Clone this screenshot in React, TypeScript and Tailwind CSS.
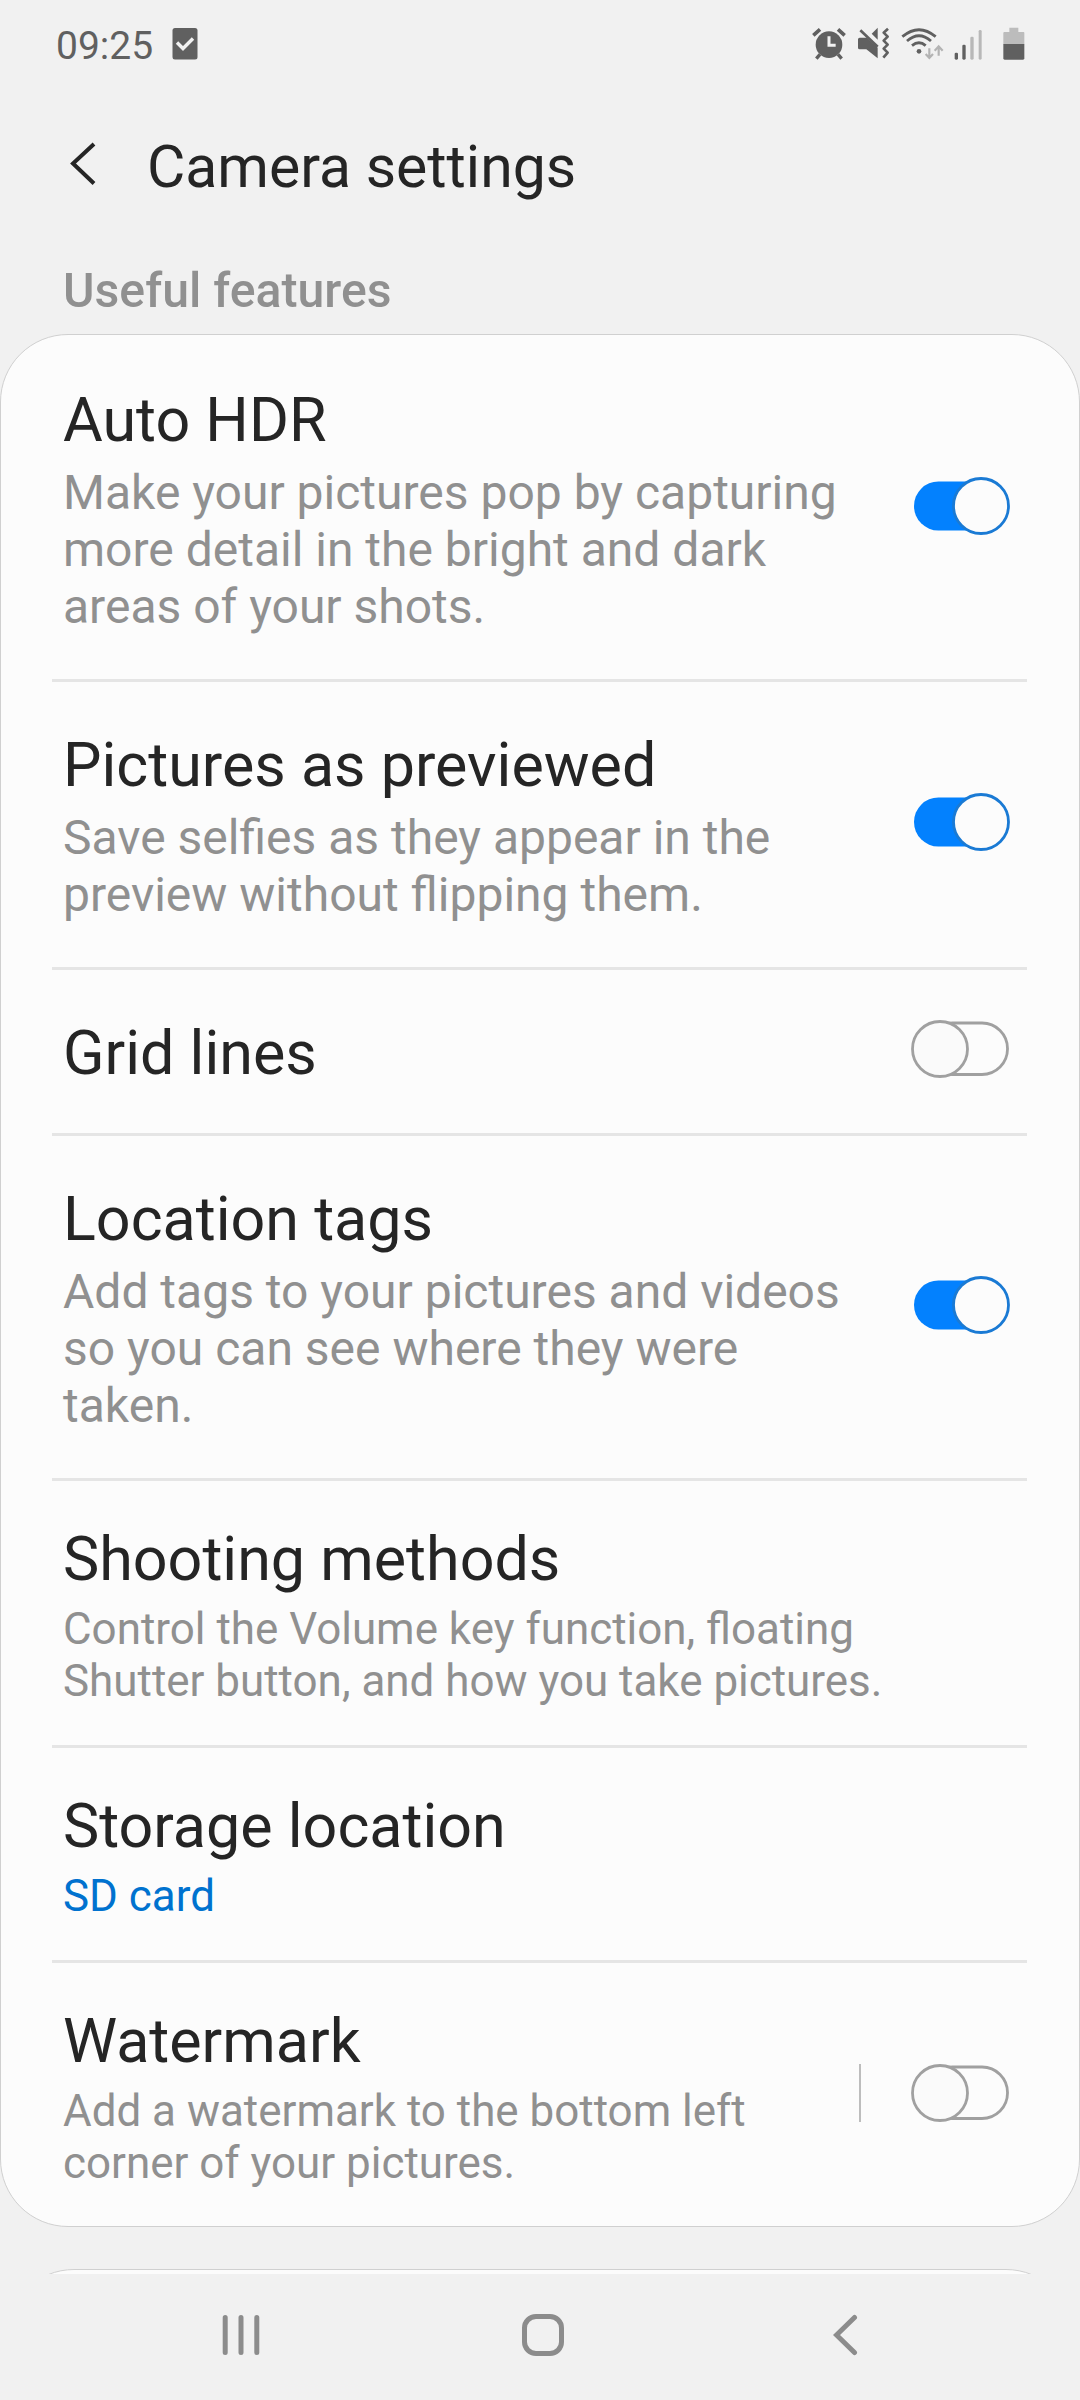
import type { ReactNode } from 'react';

function Toggle({ on, lift = 'mb-[3px]' }: { on: boolean; lift?: string }) {
  return (
    <svg className={`block h-[60px] w-[100px] shrink-0 ${lift}`} viewBox="0 0 100 60" fill="none">
      {on ? (
        <>
          <rect x="3" y="5.5" width="90" height="49" rx="24.5" fill="#0381fe" />
          <circle cx="70" cy="30" r="27.5" fill="#fcfcfc" stroke="#1a7ad4" strokeWidth="2.8" />
        </>
      ) : (
        <>
          <rect x="16" y="4" width="80.5" height="51.5" rx="25.5" stroke="#a0a0a0" strokeWidth="2.8" />
          <circle cx="29" cy="30" r="27.5" fill="#fafafa" stroke="#a0a0a0" strokeWidth="2.8" />
        </>
      )}
    </svg>
  );
}

function Row({ title, height, pad, children, right }: { title: string; height: string; pad: string; children?: ReactNode; right?: ReactNode }) {
  return (
    <div className={`flex items-center ${height}`}>
      <div className={`h-full flex-1 pl-[62px] ${pad}`}>
        <h2 className="text-[61px] leading-[70px] whitespace-nowrap text-[#252525]">{title}</h2>
        {children}
      </div>
      <div className="flex items-center pr-[68px]">{right}</div>
    </div>
  );
}

function Large({ lines }: { lines: string[] }) {
  return (
    <div className="mt-[9px] text-[48px] leading-[57px] whitespace-nowrap text-[#909090]">
      {lines.map((l) => (
        <p key={l}>{l}</p>
      ))}
    </div>
  );
}

function Small({ lines, color = 'text-[#909090]' }: { lines: string[]; color?: string }) {
  return (
    <div className={`mt-[9px] text-[43.95px] leading-[52px] whitespace-nowrap ${color}`}>
      {lines.map((l) => (
        <p key={l}>{l}</p>
      ))}
    </div>
  );
}

function Divider() {
  return <div className="mr-[52px] ml-[51px] h-[3px] bg-[#e5e5e5]" />;
}

function StatusBar() {
  return (
    <div className="flex h-[88px] items-start pt-[26px] pl-[56px]">
      <span className="mt-[-3px] text-[39px] leading-[46px] text-[#606060]">09:25</span>
      <svg className="mt-[2px] ml-[19px] h-[32px] w-[26px]" viewBox="0 0 26 32" fill="none">
        <rect x="0.5" y="0" width="25" height="31.5" rx="2.5" fill="#606060" />
        <path d="M5 14.5 L11 20.5 L21 10.5" stroke="#f1f1f1" strokeWidth="3.4" />
      </svg>
      <div className="mt-[1px] ml-auto flex h-[34px] pr-[54px]">
        <svg className="h-[34px] w-[34px]" viewBox="96 50 102 102" fill="none" stroke="#606060">
          <circle cx="147" cy="103" r="40" fill="#606060" stroke="none" />
          <path d="M100 75 L120 57 M174 57 L194 75" strokeWidth="11" />
          <path d="M120 132 L109 145 M174 132 L185 145" strokeWidth="10" />
          <path d="M147 78 V105 H167" stroke="#f1f1f1" strokeWidth="9" />
        </svg>
        <svg className="ml-[11px] h-[34px] w-[34px]" viewBox="232 50 102 102" fill="none">
          <path d="M240 82 H262 L294 112 V144 L260 117 H240 Q235 117 235 112 V87 Q235 82 240 82Z" fill="#606060" />
          <path d="M276 70 L294 52 V88Z" fill="#606060" />
          <path d="M242 60 L294 109" stroke="#606060" strokeWidth="8" />
          <path d="M325 55 L312 67 L324 79 L312 91 L324 103 L312 115 L324 127 L311 142" stroke="#606060" strokeWidth="8" strokeLinejoin="round" />
        </svg>
        <svg className="ml-[10px] h-[34px] w-[44px]" viewBox="364 50 132 102" fill="none">
          <path d="M368 79 Q418 37 468 79 M382 92 Q418 61 454 92 M397 106 Q418 89 438 106" stroke="#606060" strokeWidth="8.5" />
          <circle cx="418" cy="123" r="7" fill="#606060" />
          <path d="M449 114 V142 M438 131 L449 143 L460 131 M477 136 V109 M465 121 L477 108 L489 121" stroke="#b3b3b3" strokeWidth="6.5" />
        </svg>
        <svg className="ml-[8px] h-[34px] w-[30px]" viewBox="520 50 90 102">
          <rect x="525" y="127" width="10" height="21" rx="4" fill="#606060" />
          <rect x="548" y="103" width="10" height="45" rx="4" fill="#606060" />
          <rect x="572" y="79" width="10" height="69" rx="4" fill="#b8b8b8" />
          <rect x="597" y="59" width="9" height="89" rx="4" fill="#b8b8b8" />
        </svg>
        <svg className="ml-[19px] h-[34px] w-[24px]" viewBox="668 50 72 102">
          <path d="M690 52 H717 V65 H733 Q735 65 735 68 V102 H672 V68 Q672 65 675 65 H690Z" fill="#bcbcbc" />
          <path d="M672 101 H735 V144 Q735 148 731 148 H676 Q672 148 672 144Z" fill="#606060" />
        </svg>
      </div>
    </div>
  );
}

export default function App() {
  return (
    <div className="flex h-[2400px] w-[1080px] flex-col overflow-hidden bg-[#f1f1f1] font-[Roboto,sans-serif]">
      <StatusBar />
      <header className="flex h-[152px] items-center pl-[68px]">
        <svg className="h-[44px] w-[28px]" viewBox="0 0 28 44" fill="none">
          <path d="M26 2 L5 21.5 L26 41.5" stroke="#252525" strokeWidth="4" />
        </svg>
        <h1 className="mt-[5px] ml-[51px] text-[58.9px] leading-[70px] whitespace-nowrap text-[#252525]">Camera settings</h1>
      </header>
      <div className="h-[94px] pt-[22px] pl-[63px] text-[48.2px] leading-[57px] font-medium text-[#909090]">Useful features</div>
      <main className="h-[1893px] shrink-0 rounded-[68px] border border-[#d0d0d0] bg-[#fcfcfc]">
        <Row title="Auto HDR" height="h-[344px]" pad="pt-[50px]" right={<Toggle on lift="mb-[2px]" />}>
          <Large lines={['Make your pictures pop by capturing', 'more detail in the bright and dark', 'areas of your shots.']} />
        </Row>
        <Divider />
        <Row title="Pictures as previewed" height="h-[285px]" pad="pt-[48px]" right={<Toggle on lift="mb-[5px]" />}>
          <Large lines={['Save selfies as they appear in the', 'preview without flipping them.']} />
        </Row>
        <Divider />
        <Row title="Grid lines" height="h-[163px]" pad="pt-[48px]" right={<Toggle on={false} lift="mb-[5px]" />} />
        <Divider />
        <Row title="Location tags" height="h-[342px]" pad="pt-[48px]" right={<Toggle on lift="mb-[4px]" />}>
          <Large lines={['Add tags to your pictures and videos', 'so you can see where they were', 'taken.']} />
        </Row>
        <Divider />
        <Row title="Shooting methods" height="h-[264px]" pad="pt-[43px]">
          <Small lines={['Control the Volume key function, floating', 'Shutter button, and how you take pictures.']} />
        </Row>
        <Divider />
        <Row title="Storage location" height="h-[212px]" pad="pt-[43px]">
          <Small lines={['SD card']} color="text-[#0072cf]" />
        </Row>
        <Divider />
        <Row
          title="Watermark"
          height="h-[263px]"
          pad="pt-[43px]"
          right={
            <>
              <div className="mr-[50px] mb-[3px] h-[58px] w-[2px] bg-[#bdbdbd]" />
              <Toggle on={false} />
            </>
          }
        >
          <Small lines={['Add a watermark to the bottom left', 'corner of your pictures.']} />
        </Row>
      </main>
      <div className="mx-[6px] mt-[42px] h-[5px] shrink-0 overflow-hidden">
        <div className="h-[142px] rounded-[68px] border border-[#d0d0d0] bg-[#fcfcfc]" />
      </div>
      <nav className="flex h-[126px] shrink-0 items-start pt-[40px] pl-[222px]">
        <svg className="h-[42px] w-[38px]" viewBox="0 0 38 42" stroke="#8c8c8c" strokeWidth="5" strokeLinecap="round">
          <path d="M3.2 3.5 V38.5 M19 3.5 V38.5 M34.8 3.5 V38.5" />
        </svg>
        <div className="ml-[262px] h-[42px] w-[42px] rounded-[14px] border-[5px] border-[#8c8c8c]" />
        <svg className="ml-[269px] h-[42px] w-[26px]" viewBox="0 0 26 42" fill="none">
          <path d="M21.5 3.5 L3.5 21 L21.5 38.5" stroke="#8c8c8c" strokeWidth="5" strokeLinecap="round" />
        </svg>
      </nav>
    </div>
  );
}
